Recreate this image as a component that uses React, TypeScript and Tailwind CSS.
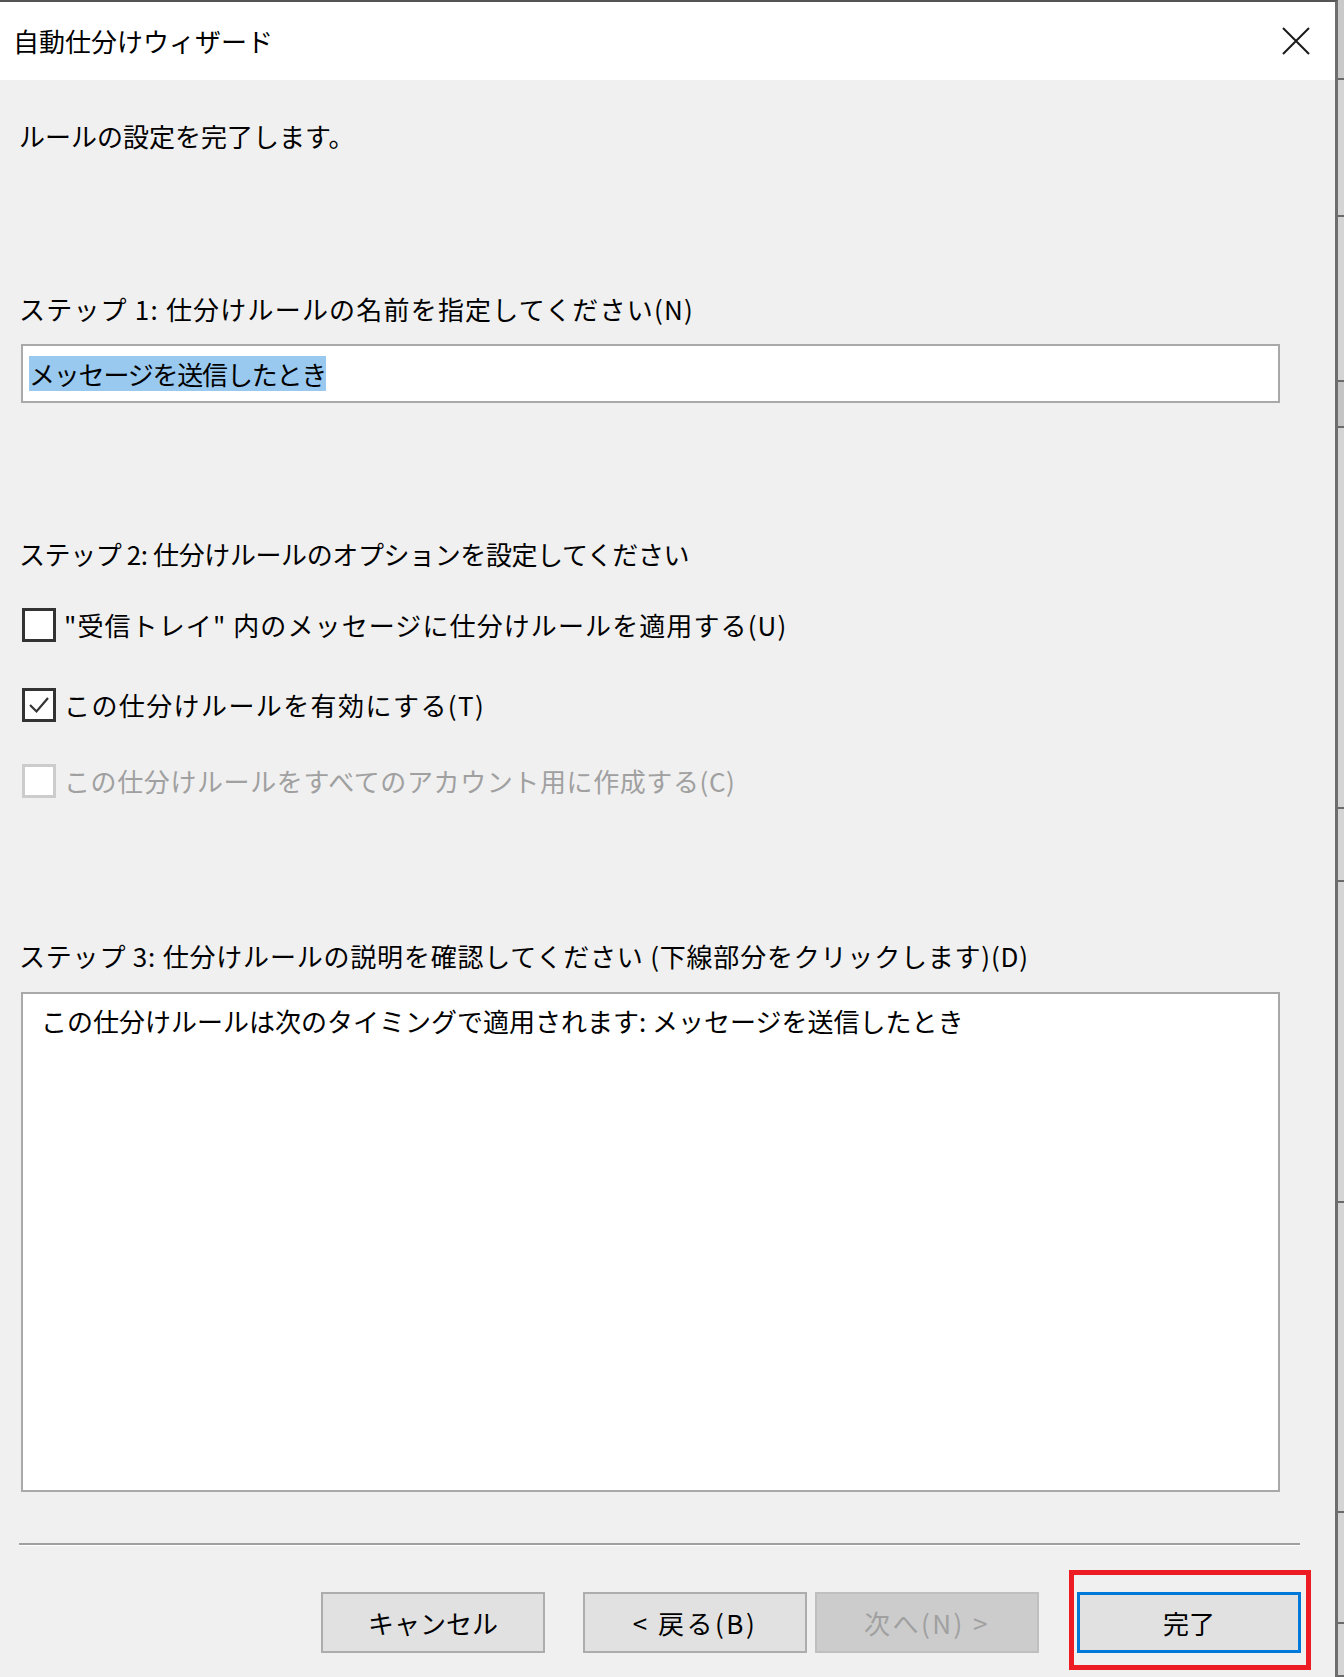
import React from "react";

const stripSegments = [
  { h: "h-[80px]", c: "bg-[#c9c9c9]" },
  { h: "h-[137px]", c: "bg-[#d4d4d4]" },
  { h: "h-[165px]", c: "bg-[#d4d4d4]" },
  { h: "h-[46px]", c: "bg-[#c4c4c4]" },
  { h: "h-[381px]", c: "bg-[#d4d4d4]" },
  { h: "h-[73px]", c: "bg-[#d4d4d4]" },
  { h: "h-[321px]", c: "bg-[#d4d4d4]" },
  { h: "h-[310px]", c: "bg-[#d4d4d4]" },
  { h: "h-[111px]", c: "bg-[#d4d4d4]" },
  { h: "h-[53px]", c: "bg-[#d4d4d4]" },
];

const CloseIcon = () => (
  <svg width="28" height="28" viewBox="0 0 28 28" fill="none">
    <path d="M1 1 L27 27 M27 1 L1 27" stroke="#1a1a1a" strokeWidth="2" />
  </svg>
);

const Checkbox = ({ checked = false, disabled = false }: { checked?: boolean; disabled?: boolean }) => (
  <div
    className={`w-[34px] h-[34px] shrink-0 bg-white border-[3px] flex items-center justify-center ${
      disabled ? "border-[#cccccc]" : "border-[#333333]"
    }`}
  >
    {checked && (
      <svg width="24" height="24" viewBox="0 0 24 24" fill="none">
        <path d="M3 12 L9.5 18.5 L21 5" stroke="#333333" strokeWidth="2.2" />
      </svg>
    )}
  </div>
);

const DialogButton = ({
  children,
  disabled = false,
  primary = false,
}: {
  children: React.ReactNode;
  disabled?: boolean;
  primary?: boolean;
}) => (
  <div
    className={`w-[224px] h-[61px] flex items-center justify-center text-[26px] leading-none ${
      primary
        ? "border-[3px] border-[#0078d7] bg-[#e1e1e1] text-black"
        : disabled
        ? "border-2 border-[#bfbfbf] bg-[#cccccc] text-[#a0a0a0]"
        : "border-2 border-[#adadad] bg-[#e1e1e1] text-black"
    }`}
  >
    {children}
  </div>
);

export default function App() {
  return (
    <div className="w-[1344px] h-[1677px] flex overflow-hidden bg-[#d4d4d4] font-['Noto_Sans_CJK_JP','Noto_Sans',sans-serif] text-black">
      {/* dialog */}
      <div className="w-[1338px] h-full flex flex-col border-t-2 border-t-[#555555] border-r-[3px] border-r-[#6e6e6e] bg-[#f0f0f0]">
        {/* title bar */}
        <div className="h-[78px] shrink-0 bg-white flex items-center justify-between pl-[13px] pr-[25px]">
          <span className="text-[26px] leading-[36px]">自動仕分けウィザード</span>
          <CloseIcon />
        </div>

        {/* body */}
        <div className="flex-1 flex flex-col pl-[19px] pt-[38px] text-[26px] leading-[36px]">
          <div>ルールの設定を完了します。</div>

          <div className="mt-[137px] tracking-[1.2px]">ステップ 1: 仕分けルールの名前を指定してください(N)</div>
          <div className="mt-[17px] ml-[2px] w-[1259px] h-[59px] bg-white border-2 border-[#a9a9a9] flex items-center pl-[6px]">
            <span className="bg-[#99c9ef] leading-[35px] tracking-[-1.2px]">メッセージを送信したとき</span>
          </div>

          <div className="mt-[133px] tracking-[-0.4px]">ステップ 2: 仕分けルールのオプションを設定してください</div>
          <div className="mt-[35px] ml-[3px] flex items-center gap-[8px]">
            <Checkbox />
            <span className="tracking-[1.1px]">"受信トレイ" 内のメッセージに仕分けルールを適用する(U)</span>
          </div>
          <div className="mt-[44px] ml-[3px] flex items-center gap-[8px]">
            <Checkbox checked />
            <span className="tracking-[1.4px]">この仕分けルールを有効にする(T)</span>
          </div>
          <div className="mt-[40px] ml-[3px] flex items-center gap-[8px] text-[#a0a0a0]">
            <Checkbox disabled />
            <span className="tracking-[0.6px]">この仕分けルールをすべてのアカウント用に作成する(C)</span>
          </div>

          <div className="mt-[139px] tracking-[0.8px]">ステップ 3: 仕分けルールの説明を確認してください (下線部分をクリックします)(D)</div>
          <div className="mt-[18px] ml-[2px] w-[1259px] h-[500px] bg-white border-2 border-[#a9a9a9] pl-[18px] pt-[9px]">
            <div>この仕分けルールは次のタイミングで適用されます: メッセージを送信したとき</div>
          </div>

          <div className="mt-[51px] w-[1281px] h-[3px] border-t-2 border-t-[#a0a0a0] border-b border-b-white" />

          <div className="mt-[46px] flex items-center pl-[302px]">
            <DialogButton>キャンセル</DialogButton>
            <div className="ml-[38px]">
              <DialogButton>
                <span className="tracking-[2.5px]">&lt; 戻る(B)</span>
              </DialogButton>
            </div>
            <div className="ml-[8px]">
              <DialogButton disabled>
                <span className="tracking-[2.5px]">次へ(N) &gt;</span>
              </DialogButton>
            </div>
            <div className="ml-[38px] relative">
              <DialogButton primary>完了</DialogButton>
              <div className="absolute -left-[8px] -top-[22px] -right-[10px] -bottom-[17px] border-[5px] border-[#ed1c24] pointer-events-none" />
            </div>
          </div>
        </div>
      </div>

      {/* background window strip */}
      <div className="flex-1 flex flex-col">
        {stripSegments.map((s, i) => (
          <div key={i} className={`${s.h} ${s.c} shrink-0 border-b-2 border-b-[#6a6a6a]`} />
        ))}
      </div>
    </div>
  );
}
